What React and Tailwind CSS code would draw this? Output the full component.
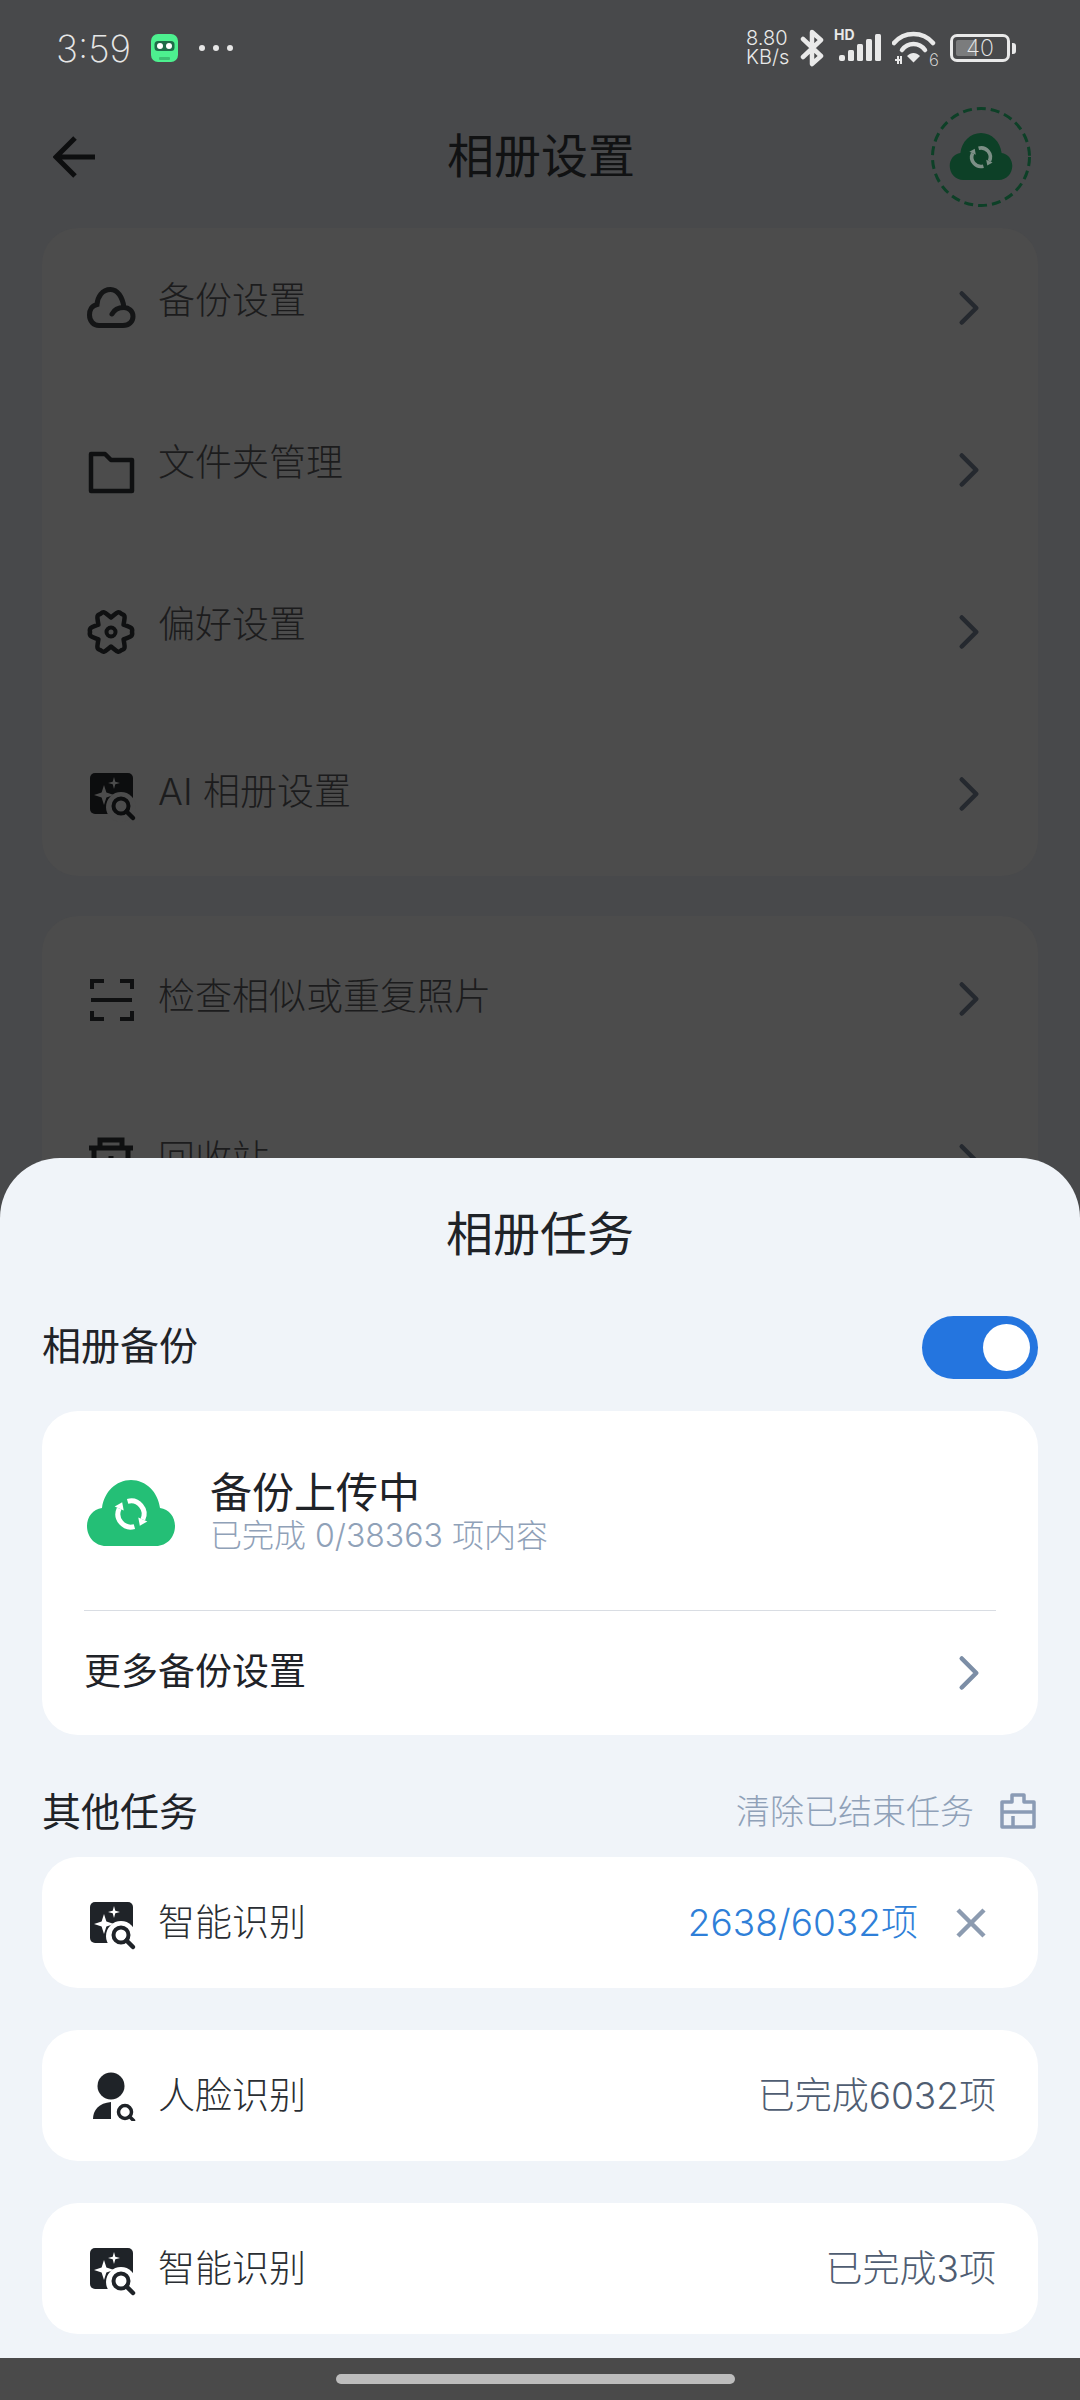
import { ChevronRight } from "lucide-react"

const fontStack = "font-['Inter','Noto_Sans_CJK_SC',sans-serif]"

// cloud with the two-arrow sync mark, used in the header and the backup card
function SyncCloud({ className, fill, ring }) {
  return (
    <svg viewBox="0 0 90 68" className={className}>
      <path
        d="M20 67H70C81 67 89 58 89 47C89 38 83 30 74 29C72 13 60 1 45 1C30 1 18 13 16 29C7 30 1 38 1 47C1 58 9 67 20 67Z"
        fill={fill}
      />
      <g transform="translate(0 -2)">
        <g fill="none" stroke={ring} strokeWidth="5">
          <path d="M41.6 24.4A13 13 0 0 1 56.8 42.5" />
          <path d="M48.4 49.6A13 13 0 0 1 33.2 31.5" />
        </g>
        <path d="M61.3 44.6L52.3 40.4L53.8 48.8Z" fill={ring} />
        <path d="M28.7 29.4L37.7 33.6L36.2 25.2Z" fill={ring} />
      </g>
    </svg>
  )
}

function SparkSearch({ color, bg }) {
  return (
    <svg viewBox="0 0 50 50" className="w-[50px] h-[50px] overflow-visible">
      <rect x="4" y="4" width="43" height="41" rx="5" fill={color} />
      <circle cx="35" cy="38" r="15" fill={bg} />
      <circle cx="35" cy="37" r="7.5" fill="none" stroke={color} strokeWidth="4" />
      <path d="M40.5 42.5L47 49" stroke={color} strokeWidth="4.5" strokeLinecap="round" />
      <path d="M18 16L20.4 23.6L28 26L20.4 28.4L18 36L15.6 28.4L8 26L15.6 23.6Z" fill={bg} />
      <path d="M28 8L29.3 12.7L34 14L29.3 15.3L28 20L26.7 15.3L22 14L26.7 12.7Z" fill={bg} />
    </svg>
  )
}

function PersonSearch({ color }) {
  return (
    <svg viewBox="0 0 50 50" className="w-[50px] h-[50px]">
      <circle cx="25" cy="15" r="13.5" fill={color} />
      <path d="M7 48C7 39 13 32 25 31V48Z" fill={color} />
      <circle cx="39" cy="41" r="6.5" fill="none" stroke={color} strokeWidth="3.5" />
      <path d="M43.5 45.5L47.5 49.5" stroke={color} strokeWidth="3.5" strokeLinecap="round" />
    </svg>
  )
}

function CloudLine({ color }) {
  return (
    <svg viewBox="0 0 50 50" className="w-[50px] h-[50px]" fill="none" stroke={color} strokeWidth="5" strokeLinecap="round">
      <path d="M13 42.5H37C43 42.5 47 38.5 47 33.5C47 28 42.5 24.5 38 24.5C36.5 14 31.5 6.5 24.5 6.5C16 6.5 11.5 14 11 21.5C6 22.5 3.5 27 3.5 32C3.5 38 7.5 42.5 13 42.5Z" />
      <path d="M26 31C28 27 32 24.5 38 24.5" />
    </svg>
  )
}

function FolderLine({ color }) {
  return (
    <svg viewBox="0 0 50 50" className="w-[50px] h-[50px]" fill="none" stroke={color} strokeWidth="4.5" strokeLinejoin="round">
      <path d="M5 9H19L25 15H46V46H5Z" />
    </svg>
  )
}

// six lobes joined by notches
function gearPath() {
  const point = (deg, r) => {
    const a = (deg * Math.PI) / 180
    return `${(25 + r * Math.cos(a)).toFixed(2)} ${(25 + r * Math.sin(a)).toFixed(2)}`
  }
  let d = `M${point(-30, 14.5)}`
  for (let lobe = 0; lobe < 360; lobe += 60) {
    d += `C${point(lobe - 13, 20)} ${point(lobe - 12, 22.5)} ${point(lobe, 21)}`
    d += `C${point(lobe + 12, 22.5)} ${point(lobe + 13, 20)} ${point(lobe + 30, 14.5)}`
  }
  return d + "Z"
}

function GearLine({ color }) {
  return (
    <svg viewBox="0 0 50 50" className="w-[50px] h-[50px]" fill="none" stroke={color} strokeLinejoin="round">
      <path d={gearPath()} strokeWidth="4.5" />
      <circle cx="25" cy="25" r="4.5" strokeWidth="4" />
    </svg>
  )
}

function ScanLine({ color }) {
  return (
    <svg viewBox="0 0 50 50" className="w-[50px] h-[50px]" fill="none" stroke={color} strokeWidth="4">
      <path d="M18 7H6V15M34 7H46V15M18 45H6V37M34 45H46V37" />
      <path d="M5 26H46" />
    </svg>
  )
}

function TrashLine({ color }) {
  return (
    <svg viewBox="0 0 50 50" className="w-[50px] h-[50px]" fill="none" stroke={color} strokeWidth="5">
      <path d="M14 10V4H36V10" />
      <path d="M3 12H47" />
      <path d="M8 12V48H42V12" />
      <path d="M25 20V28" />
    </svg>
  )
}

function ToolboxIcon({ color }) {
  return (
    <svg viewBox="0 0 36 36" className="w-[36px] h-[36px]" fill="none" stroke={color} strokeWidth="3.5" strokeLinejoin="round">
      <path d="M2 9H12V2H24V9H34V34H2Z" />
      <path d="M2 19H34" />
      <path d="M13 23V34" />
    </svg>
  )
}

function StatusIcons() {
  return (
    <div className="flex items-center text-[#e9e9e9]">
      <div className="flex flex-col text-[20px] leading-[19px] font-light w-[46px] mr-[8px]">
        <span>8.80</span>
        <span>KB/s</span>
      </div>
      <svg viewBox="0 0 24 38" className="w-[24px] h-[38px] mr-[10px]" fill="none" stroke="currentColor" strokeWidth="4.5" strokeLinejoin="round" strokeLinecap="round">
        <path d="M3 10L21 27L12 35V3L21 11L3 28" />
      </svg>
      <div className="relative w-[48px] h-[30px] mr-[10px]">
        <span className="absolute left-0 top-[-5px] text-[14px] leading-[14px] font-bold">HD</span>
        <svg viewBox="0 0 48 30" className="w-[48px] h-[30px]" fill="currentColor">
          <rect x="5" y="22" width="6" height="6" rx="2" />
          <rect x="14" y="17" width="6" height="11" rx="1.5" />
          <rect x="23" y="11" width="6" height="17" rx="1.5" />
          <rect x="32" y="6" width="6" height="22" rx="1.5" />
          <rect x="41" y="1" width="6" height="27" rx="1.5" />
        </svg>
      </div>
      <div className="relative w-[46px] h-[34px] mr-[12px]">
        <svg viewBox="0 0 46 34" className="w-[46px] h-[34px]" fill="none" stroke="currentColor" strokeWidth="4.5" strokeLinecap="round">
          <path d="M2 12C12 0 31 0 41 12" />
          <path d="M10 19C16 11 27 11 33 19" />
          <path d="M15 25C19 21 24 21 28 25L21.5 31.5Z" fill="currentColor" stroke="none" />
          <path d="M3 29H10M6 25V33M9 25V33" strokeWidth="2" strokeLinecap="butt" />
        </svg>
        <span className="absolute right-[-1px] bottom-[-3px] text-[17px] leading-[16px] font-extralight">6</span>
      </div>
      <div className="relative w-[60px] h-[28px] border-[3px] border-[#e9e9e9] rounded-[7px] p-[3px] mr-[2px]">
        <div className="w-[20px] h-full bg-[#7b7c7d] rounded-l-[2px]" />
        <span className="absolute inset-0 flex items-center justify-center text-[23px] leading-none font-extralight">40</span>
      </div>
      <div className="w-[4px] h-[11px] bg-[#e9e9e9] rounded-r-[3px]" />
    </div>
  )
}

const settingsGroups = [
  {
    rowClass: "pb-[2px]",
    items: [
      { label: "备份设置", icon: <CloudLine color="#141516" />, lift: "mb-[14px]" },
      { label: "文件夹管理", icon: <FolderLine color="#0f1011" />, lift: "mb-[14px]" },
      { label: "偏好设置", icon: <GearLine color="#0f1011" />, lift: "mb-[14px]" },
      { label: "AI 相册设置", icon: <SparkSearch color="#0c0d0e" bg="#4c4c4c" />, lift: "mb-[4px]" },
    ],
  },
  {
    rowClass: "pt-[4px]",
    items: [
      { label: "检查相似或重复照片", icon: <ScanLine color="#0f1011" />, lift: "mb-[4px]" },
      { label: "回收站", icon: <TrashLine color="#0f1011" />, lift: "mb-[4px]" },
    ],
  },
]

function SettingsRow({ item, rowClass }) {
  return (
    <div className={`h-[162px] flex items-center pl-[44px] pr-[40px] ${rowClass}`}>
      {item.icon}
      <span className={`ml-[22px] text-[37px] leading-[44px] text-[#1c1c1d] font-light ${item.lift}`}>{item.label}</span>
      <ChevronRight className="ml-auto w-[58px] h-[58px] text-[#25292f]" strokeWidth={1.9} />
    </div>
  )
}

function TaskRow({ icon, label, children }) {
  return (
    <div className="h-[131px] bg-white rounded-[36px] flex items-center pl-[44px] pr-[42px]">
      {icon}
      <span className="ml-[22px] text-[37px] leading-[44px] text-[#2a2e33] font-light">{label}</span>
      <div className="ml-auto flex items-center">{children}</div>
    </div>
  )
}

function AlbumSheet() {
  return (
    <div className="bg-[#f0f4f9] rounded-t-[60px] px-[42px] pb-[24px] h-[1200px]">
      <div className="h-[150px] pt-[2px] flex items-center justify-center text-[47px] leading-[56px] text-[#1f2328]">相册任务</div>

      <div className="mt-[8px] h-[63px] mb-[32px] flex items-center justify-between">
        <span className="text-[39px] leading-[46px] text-[#1f2328] mb-[4px]">相册备份</span>
        <div className="w-[116px] h-[63px] rounded-full bg-[#2475df] flex items-center justify-end pr-[8px]">
          <div className="w-[47px] h-[47px] rounded-full bg-white" />
        </div>
      </div>

      <div className="bg-white rounded-[36px]">
        <div className="h-[200px] mx-[42px] flex items-center border-b border-[#d9dde3]">
          <SyncCloud className="w-[90px] h-[68px] ml-[2px] mt-[5px]" fill="#24bf76" ring="#ffffff" />
          <div className="ml-[34px] flex flex-col pt-[2px]">
            <span className="text-[42px] leading-[48px] text-[#1f2328]">备份上传中</span>
            <span className="text-[32px] leading-[38px] text-[#8fa1b8] font-light">已完成 0/38363 项内容</span>
          </div>
        </div>
        <div className="h-[124px] flex items-center pl-[42px] pr-[40px]">
          <span className="text-[37px] leading-[44px] text-[#1f2328] mb-[2px]">更多备份设置</span>
          <ChevronRight className="ml-auto w-[58px] h-[58px] text-[#7c8ea6]" strokeWidth={1.9} />
        </div>
      </div>

      <div className="mt-[30px] h-[92px] flex items-center justify-between">
        <span className="text-[39px] leading-[46px] text-[#1f2328] mt-[2px]">其他任务</span>
        <div className="flex items-center pr-[2px]">
          <span className="text-[34px] leading-[40px] text-[#8fa1b8] font-light mt-[2px]">清除已结束任务</span>
          <div className="ml-[26px]">
            <ToolboxIcon color="#8a9bb5" />
          </div>
        </div>
      </div>

      <div className="flex flex-col gap-[42px]">
        <TaskRow icon={<SparkSearch color="#1f2328" bg="#ffffff" />} label="智能识别">
          <span className="text-[37px] leading-[44px] text-[#2f7fd8] font-light">2638/6032项</span>
          <svg viewBox="0 0 30 30" className="w-[30px] h-[30px] ml-[38px] mr-[10px]" stroke="#8c9bb0" strokeWidth="4.5">
            <path d="M2 2L28 28M28 2L2 28" />
          </svg>
        </TaskRow>
        <TaskRow icon={<PersonSearch color="#1f2328" />} label="人脸识别">
          <span className="text-[37px] leading-[44px] text-[#4f5d72] font-light">已完成6032项</span>
        </TaskRow>
        <TaskRow icon={<SparkSearch color="#1f2328" bg="#ffffff" />} label="智能识别">
          <span className="text-[37px] leading-[44px] text-[#4f5d72] font-light">已完成3项</span>
        </TaskRow>
      </div>
    </div>
  )
}

function App() {
  return (
    <div className={`relative w-[1080px] h-[2400px] overflow-hidden bg-[#48494b] ${fontStack}`}>
      {/* status bar */}
      <div className="h-[96px] flex items-center justify-between pl-[56px] pr-[64px]">
        <div className="flex items-center">
          <span className="text-[37px] leading-none text-[#e6e6e6] font-extralight">3:59</span>
          <svg viewBox="0 0 27 28" className="w-[27px] h-[28px] ml-[20px]">
            <rect width="27" height="28" rx="7" fill="#4df08f" />
            <rect x="3.5" y="7" width="20" height="10" rx="3.5" fill="#1e6b48" />
            <circle cx="9" cy="12" r="3" fill="#ffffff" />
            <circle cx="18" cy="12" r="3" fill="#ffffff" />
            <rect x="8" y="23" width="11" height="3" rx="1" fill="#3bbf73" />
          </svg>
          <div className="ml-[21px] flex gap-[8px]">
            <div className="w-[6px] h-[6px] rounded-full bg-[#e6e6e6]" />
            <div className="w-[6px] h-[6px] rounded-full bg-[#e6e6e6]" />
            <div className="w-[6px] h-[6px] rounded-full bg-[#e6e6e6]" />
          </div>
        </div>
        <StatusIcons />
      </div>

      {/* toolbar */}
      <div className="h-[122px] grid grid-cols-[1fr_auto_1fr] items-center pl-[53px] pr-[49px]">
        <svg viewBox="0 0 42 42" className="w-[42px] h-[42px]" fill="none" stroke="#0d0e0f" strokeWidth="5">
          <path d="M22 2L3 21L22 40M3 21H42" />
        </svg>
        <span className="text-[47px] leading-[56px] text-[#111213] mb-[2px] mr-[2px]">相册设置</span>
        <div className="relative justify-self-end w-[100px] h-[100px] flex items-center justify-center">
          <svg viewBox="0 0 100 100" className="absolute inset-0">
            <circle cx="50" cy="50" r="48.5" fill="none" stroke="#0d4027" strokeWidth="3" strokeDasharray="9 5" />
          </svg>
          <SyncCloud className="w-[64px] h-[49px] mb-[2px]" fill="#0d4027" ring="#7c8f86" />
        </div>
      </div>

      {/* settings groups behind the sheet */}
      <div className="mt-[10px] px-[42px] flex flex-col gap-[40px]">
        {settingsGroups.map((group, i) => (
          <div key={i} className="bg-[#4c4c4c] rounded-[36px]">
            {group.items.map((item) => (
              <SettingsRow key={item.label} item={item} rowClass={group.rowClass} />
            ))}
          </div>
        ))}
      </div>

      {/* bottom sheet and gesture bar */}
      <div className="absolute inset-x-0 bottom-0 flex flex-col">
        <AlbumSheet />
        <div className="h-[42px] bg-[#4a4a4a] flex items-start justify-center pt-[16px]">
          <div className="w-[399px] h-[10px] rounded-full bg-[#bdbdbd] mr-[9px]" />
        </div>
      </div>
    </div>
  )
}

export default App
